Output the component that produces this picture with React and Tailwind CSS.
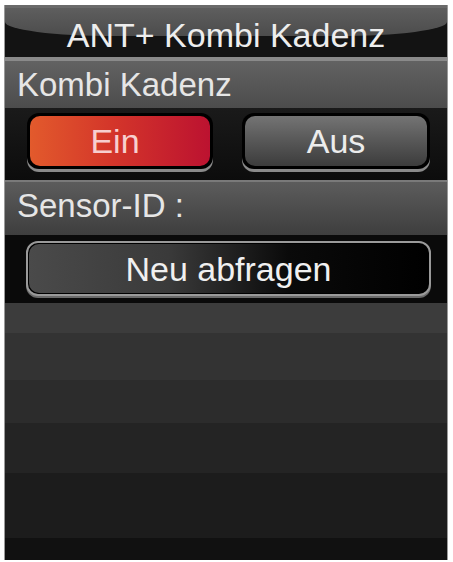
import React from "react"

const font = { fontFamily: '"Liberation Sans", Arial, sans-serif' }

function Toggle({ label, active }) {
  return (
    <div className="rounded-[12px] bg-black p-[3px] shadow-[0_3px_0_#8a8a8a]">
      <div
        className={
          active
            ? "flex h-[50px] w-[180px] items-center justify-center rounded-[10px] bg-[linear-gradient(90deg,#e25a2c_0%,#d4362a_45%,#bc1230_100%)] pr-[10px] text-[34px] leading-none text-[#f7cfcf]"
            : "flex h-[50px] w-[182px] items-center justify-center rounded-[10px] bg-[linear-gradient(180deg,#747474_0%,#5a5a5a_45%,#3c3c3c_100%)] text-[34px] leading-none text-[#ececec]"
        }
      >
        {label}
      </div>
    </div>
  )
}

export default function App() {
  const bands = [
    "h-[30px] bg-[#3c3c3c]",
    "h-[47px] bg-[#333333]",
    "h-[43px] bg-[#2c2c2c]",
    "h-[50px] bg-[#242424]",
    "h-[65px] bg-[#1c1c1c]",
    "h-[22px] bg-[#111111]",
  ]

  return (
    <div className="h-[562px] w-[453px] bg-white pl-[4px] pt-[5px]" style={font}>
      <div className="flex w-[444px] flex-col overflow-hidden border-x border-[#9a9a9a]">
        {/* title bar */}
        <div className="relative flex h-[52px] items-center justify-center overflow-hidden border-t-[3px] border-[#6a6a6a] bg-[#131313]">
          <div className="absolute inset-x-0 top-0 h-[28px] rounded-b-[110px_14px] bg-[linear-gradient(180deg,#5e5e5e,#4c4c4c)]" />
          <span className="relative mt-[4px] text-[34px] leading-none text-[#ededed]">
            ANT+ Kombi Kadenz
          </span>
        </div>

        {/* label row */}
        <div className="flex h-[51px] items-center border-t-[4px] border-[#8a8a8a] bg-[linear-gradient(180deg,#626262,#4c4c4c)] pl-[12px]">
          <span className="text-[33px] leading-none text-[#e6e6e6]">Kombi Kadenz</span>
        </div>

        {/* on / off */}
        <div className="flex h-[72px] items-start justify-between bg-[linear-gradient(180deg,#1a1a1a,#0c0c0c)] pl-[22px] pr-[17px] pt-[5px]">
          <Toggle label="Ein" active />
          <Toggle label="Aus" />
        </div>

        {/* sensor label */}
        <div className="flex h-[55px] items-center border-t-[2px] border-[#7a7a7a] bg-[linear-gradient(180deg,#5c5c5c,#3e3e3e)] pb-[6px] pl-[12px]">
          <span className="text-[33px] leading-none text-[#e6e6e6]">Sensor-ID :</span>
        </div>

        {/* rescan */}
        <div className="h-[68px] bg-[#0a0a0a] pl-[21px] pr-[16px] pt-[6px]">
          <div className="rounded-[12px] border-[2px] border-[#9a9a9a] bg-black p-[1px] shadow-[0_2px_0_#6a6a6a]">
            <div className="flex h-[49px] items-center justify-center rounded-[10px] bg-[linear-gradient(90deg,#4a4a4a_0%,#3a3a3a_35%,#0a0a0a_65%,#000_100%)] text-[34px] leading-none text-[#f0f0f0]">
              Neu abfragen
            </div>
          </div>
        </div>

        {/* empty list rows */}
        {bands.map((c, i) => (
          <div key={i} className={c} />
        ))}
      </div>
    </div>
  )
}
